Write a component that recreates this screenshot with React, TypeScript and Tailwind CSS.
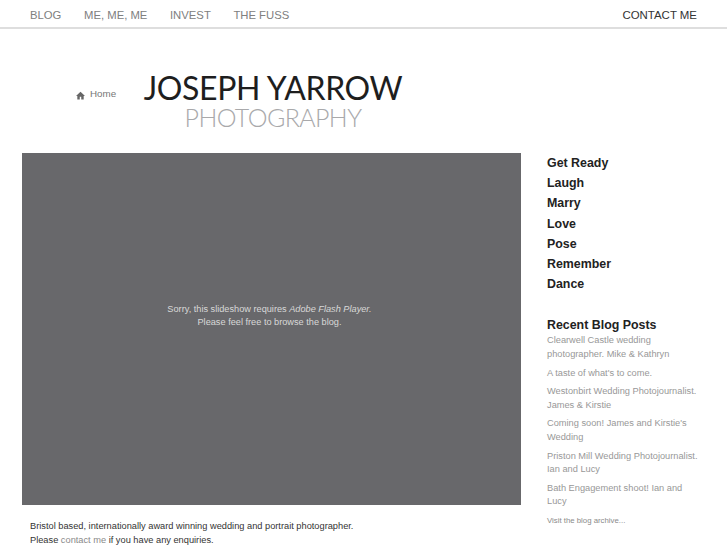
const nav = ["BLOG", "ME, ME, ME", "INVEST", "THE FUSS"];
const cats = ["Get Ready", "Laugh", "Marry", "Love", "Pose", "Remember", "Dance"];
const posts = [
  ["Clearwell Castle wedding", "photographer. Mike & Kathryn"],
  ["A taste of what's to come."],
  ["Westonbirt Wedding Photojournalist.", "James & Kirstie"],
  ["Coming soon! James and Kirstie's", "Wedding"],
  ["Priston Mill Wedding Photojournalist.", "Ian and Lucy"],
  ["Bath Engagement shoot! Ian and", "Lucy"],
];

export default function App() {
  return (
    <div className="w-[727px] h-[545px] overflow-hidden bg-white font-['Liberation_Sans',Arial,sans-serif]">
      <header className="h-[29px] border-b-2 border-[#dedede] flex items-center justify-between pl-[30px] pr-[30px] text-[11.3px] pt-[4px]">
        <nav className="flex gap-[22.6px] text-[#808080]">
          {nav.map((n) => (
            <span key={n}>{n}</span>
          ))}
        </nav>
        <span className="text-[#333333] text-[11.45px]">CONTACT ME</span>
      </header>

      <div className="h-[124px] flex pl-[76px] pt-[43px]">
        <div className="flex items-center gap-[5px] text-[#777777] text-[9.8px] h-[43px] mt-[1px] w-[67px]">
          <svg viewBox="0 0 24 24" className="w-[9px] h-[9px] mt-[2px]" fill="#666666">
            <path d="M12 2 0 13h3.5v9.5h6.5v-7h4v7h6.5V13H24z" />
          </svg>
          <span>Home</span>
        </div>
        <div className="flex flex-col items-center w-[260px] font-['Lato',sans-serif]">
          <span className="text-[#1e1e1e] text-[32px] leading-[32px] whitespace-nowrap tracking-[-0.35px] font-normal">JOSEPH YARROW</span>
          <span className="text-[#a9a9ab] text-[25px] leading-[26px] whitespace-nowrap tracking-[-0.6px] font-light">PHOTOGRAPHY</span>
        </div>
      </div>

      <main className="flex pl-[22px]">
        <section className="w-[499px]">
          <div className="h-[352px] bg-[#68686b] flex flex-col items-center justify-center pb-[26px] pr-[4px] text-[#d8d8d8] text-[9.2px] leading-[13.5px]">
            <p>Sorry, this slideshow requires <em>Adobe Flash Player.</em></p>
            <p>Please feel free to browse the blog.</p>
          </div>
          <div className="pl-[8px] pt-[14px] text-[9.25px] leading-[14px] text-[#333333]">
            <p>Bristol based, internationally award winning wedding and portrait photographer.</p>
            <p>Please <span className="text-[#8a8a8a]">contact me</span> if you have any enquiries.</p>
          </div>
        </section>

        <aside className="ml-[26px] w-[154px]">
          <ul className="text-[12.4px] font-bold text-[#222222] leading-[20.2px]">
            {cats.map((c) => (
              <li key={c}>{c}</li>
            ))}
          </ul>
          <h2 className="mt-[21px] text-[12.4px] font-bold text-[#222222] leading-[20px]">Recent Blog Posts</h2>
          <div className="mt-[-1px] flex flex-col gap-[4.8px] text-[9.25px] leading-[13.7px] text-[#989898]">
            {posts.map((p) => (
              <p key={p[0]}>
                {p.map((l) => (
                  <span key={l} className="block whitespace-nowrap">{l}</span>
                ))}
              </p>
            ))}
          </div>
          <p className="mt-[6px] text-[7.8px] leading-[12px] text-[#8a8a8a]">Visit the blog archive...</p>
        </aside>
      </main>
    </div>
  );
}
